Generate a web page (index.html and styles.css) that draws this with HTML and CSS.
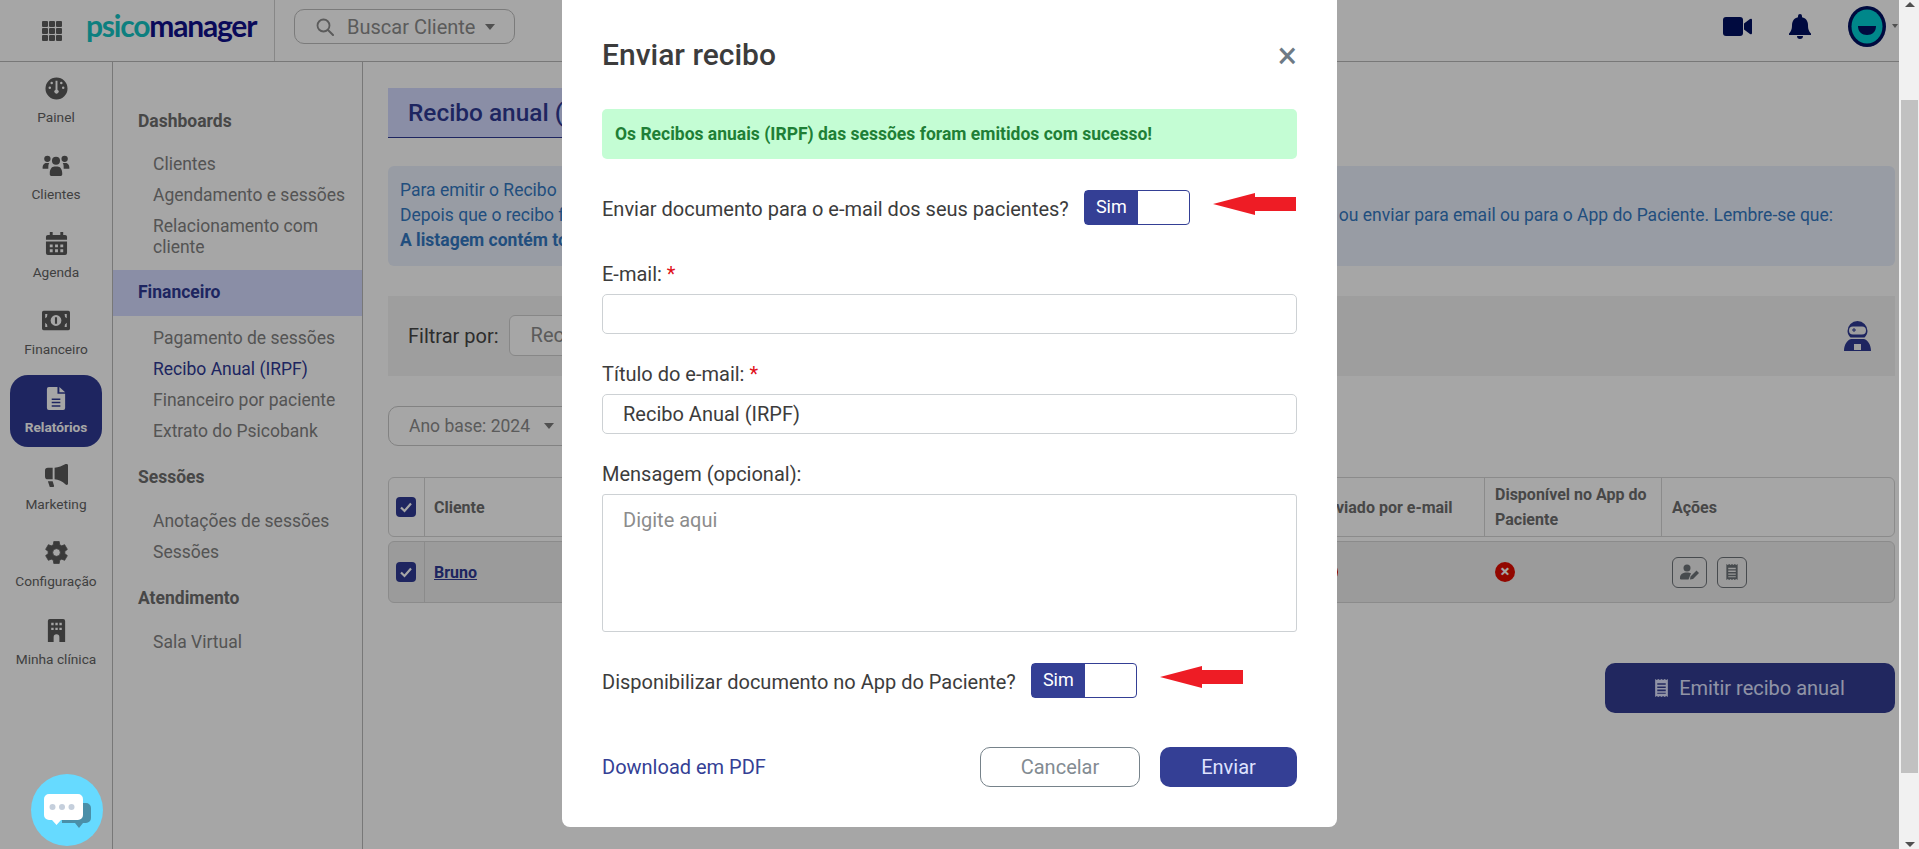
FILE: index.html
```html
<!DOCTYPE html>
<html lang="pt-BR">
<head>
    <meta charset="UTF-8">
    <title>Psicomanager - Recibo anual</title>
    <link rel="stylesheet" href="styles.css">
</head>
<body>
<div class="page">
    <header class="topbar">
        <div class="brand">
            <svg class="grid-icon" viewBox="0 0 20 20"><path d="M0 1a1 1 0 0 1 1-1h4a1 1 0 0 1 1 1v4a1 1 0 0 1-1 1H1a1 1 0 0 1-1-1zM7 1a1 1 0 0 1 1-1h4a1 1 0 0 1 1 1v4a1 1 0 0 1-1 1H8a1 1 0 0 1-1-1zM14 1a1 1 0 0 1 1-1h4a1 1 0 0 1 1 1v4a1 1 0 0 1-1 1h-4a1 1 0 0 1-1-1zM0 8a1 1 0 0 1 1-1h4a1 1 0 0 1 1 1v4a1 1 0 0 1-1 1H1a1 1 0 0 1-1-1zM7 8a1 1 0 0 1 1-1h4a1 1 0 0 1 1 1v4a1 1 0 0 1-1 1H8a1 1 0 0 1-1-1zM14 8a1 1 0 0 1 1-1h4a1 1 0 0 1 1 1v4a1 1 0 0 1-1 1h-4a1 1 0 0 1-1-1zM0 15a1 1 0 0 1 1-1h4a1 1 0 0 1 1 1v4a1 1 0 0 1-1 1H1a1 1 0 0 1-1-1zM7 15a1 1 0 0 1 1-1h4a1 1 0 0 1 1 1v4a1 1 0 0 1-1 1H8a1 1 0 0 1-1-1zM14 15a1 1 0 0 1 1-1h4a1 1 0 0 1 1 1v4a1 1 0 0 1-1 1h-4a1 1 0 0 1-1-1z"/></svg>
            <span class="logo"><span class="logo-teal">psico</span>manager</span>
        </div>
        <div class="search">
            <svg class="search-icon" viewBox="0 0 18 18"><circle cx="7.5" cy="7.5" r="6" fill="none" stroke="currentColor" stroke-width="1.8"/><path d="M12 12l5 5" stroke="currentColor" stroke-width="2" stroke-linecap="round"/></svg>
            <span>Buscar Cliente</span>
            <span class="caret"></span>
        </div>
        <div class="top-actions">
            <svg class="video-icon" viewBox="0 0 29 19"><rect width="20" height="19" rx="3"/><path d="M21 6.5l6-4.5q2-1 2 1v13q0 2-2 1l-6-4.5z"/></svg>
            <svg class="bell-icon" viewBox="0 0 22 25"><path d="M11 0a2 2 0 0 1 2 2v1.2c4 .8 6 4 6 8 0 5 1.500 6.500 3 8.300V21H0v-1.500c1.500-1.800 3-3.300 3-8.300 0-4 2-7.200 6-8V2a2 2 0 0 1 2-2zM8 22h6a3 3 0 0 1-6 0z"/></svg>
            <svg class="avatar" viewBox="0 0 38 41"><ellipse cx="19" cy="20.500" rx="19" ry="20.500" fill="#001062"/><ellipse cx="19" cy="20.500" rx="15.500" ry="17" fill="#00d0d4"/><path d="M10 20h18c0 6-4 9-9 9s-9-3-9-9z" fill="#001062"/></svg>
            <span class="caret caret-small"></span>
        </div>
    </header>

    <div class="layout">
        <nav class="rail">
            <a class="rail-item">
                <svg viewBox="0 0 24 24"><path fill-rule="evenodd" d="M12 .5a11.500 11.500 0 1 1 0 23 11.500 11.500 0 0 1 0-23zM11 4v9.200a2.200 2.200 0 1 0 2 0V4zM5 10a1.300 1.300 0 1 0 0 2.600A1.300 1.300 0 0 0 5 10zm14 0a1.300 1.300 0 1 0 0 2.600 1.300 1.300 0 0 0 0-2.600zM7 5a1.300 1.300 0 1 0 0 2.600A1.300 1.300 0 0 0 7 5zm10 0a1.300 1.300 0 1 0 0 2.600A1.300 1.300 0 0 0 17 5z"/></svg>
                <span>Painel</span>
            </a>
            <a class="rail-item">
                <svg class="wide" viewBox="0 0 28 24"><circle cx="5" cy="5" r="3.300"/><circle cx="23" cy="5" r="3.300"/><circle cx="14" cy="7" r="4.200"/><path d="M0 15c0-4 2-5.500 4-5.500h3c-1 1.500-1 3-1 6H1a1 1 0 0 1-1-.5zM28 15c0-4-2-5.500-4-5.500h-3c1 1.500 1 3 1 6h5a1 1 0 0 0 1-.5zM7.500 20c0-4 2-7 5-7h3c3 0 5 3 5 7v1.500a1.500 1.500 0 0 1-1.500 1.500H9a1.500 1.500 0 0 1-1.500-1.500z"/></svg>
                <span>Clientes</span>
            </a>
            <a class="rail-item">
                <svg viewBox="0 0 24 24"><path fill-rule="evenodd" d="M5 0h3v3h8V0h3v3h2a2 2 0 0 1 2 2v3H1V5a2 2 0 0 1 2-2h2zM1 10h22v12a2 2 0 0 1-2 2H3a2 2 0 0 1-2-2zm4 3v3h3v-3zm5.500 0v3h3v-3zm5.500 0v3h3v-3zM5 18v3h3v-3zm5.500 0v3h3v-3zm5.500 0v3h3v-3z"/></svg>
                <span>Agenda</span>
            </a>
            <a class="rail-item">
                <svg class="wide" viewBox="0 0 26 20"><path fill-rule="evenodd" d="M1.500 1h23A1.500 1.500 0 0 1 26 2.500v15a1.500 1.500 0 0 1-1.500 1.500h-23A1.500 1.500 0 0 1 0 17.500v-15A1.500 1.500 0 0 1 1.500 1zM13 5a5 5 0 1 0 0 10 5 5 0 0 0 0-10zM3 4v4a4 4 0 0 0 2-4zm20 0h-2a4 4 0 0 0 2 4zM3 16h2a4 4 0 0 0-2-4zm20 0v-4a4 4 0 0 0-2 4zM12 7h2v6h-2z"/></svg>
                <span>Financeiro</span>
            </a>
            <a class="rail-item active">
                <svg viewBox="0 0 24 24"><path fill-rule="evenodd" d="M5 0h9v7h8v15a2 2 0 0 1-2 2H5a2 2 0 0 1-2-2V2a2 2 0 0 1 2-2zm11 0l6 5.500h-6zM8 12v1.500h9V12zm0 3.500V17h9v-1.500zM8 19v1.500h9V19z" transform="translate(-1 0)"/></svg>
                <span>Relatórios</span>
            </a>
            <a class="rail-item">
                <svg viewBox="0 0 24 24"><path d="M23 0a1.500 1.500 0 0 1 1 1.500v19a1.500 1.500 0 0 1-2.500 1C18 18 14 16.500 10 16v-12c4-.5 8-2 11.500-4H23zM8 4v12H3a3 3 0 0 1-3-3V7a3 3 0 0 1 3-3zM3 18h5l1.500 5a1 1 0 0 1-1 1H5z"/></svg>
                <span>Marketing</span>
            </a>
            <a class="rail-item">
                <svg viewBox="0 0 24 24"><path fill-rule="evenodd" stroke="#5a5a5a" stroke-width=".8" stroke-linejoin="round" d="M8.700 3.840L9.150 .55H14.850L15.300 3.840L17.420 5.070L20.490 3.800L23.340 8.750L20.710 10.780V13.220L23.340 15.250L20.490 20.200L17.420 18.930L15.300 20.160L14.850 23.450H9.150L8.700 20.160L6.580 18.930L3.510 20.200L.66 15.250L3.290 13.220V10.780L.66 8.750L3.510 3.800L6.580 5.070zM12 8a4 4 0 1 0 0 8 4 4 0 0 0 0-8z"/></svg>
                <span>Configuração</span>
            </a>
            <a class="rail-item">
                <svg viewBox="0 0 24 24"><path fill-rule="evenodd" d="M5 0h14a2 2 0 0 1 2 2v22h-6v-5a3 3 0 0 0-6 0v5H3V2a2 2 0 0 1 2-2zm1.500 4v2.500h2.500V4zm4.300 0v2.500h2.500V4zm4.200 0v2.500h2.500V4zM6.500 9v2.500h2.500V9zm4.300 0v2.500h2.500V9zM15 9v2.500h2.500V9z"/></svg>
                <span>Minha clínica</span>
            </a>
        </nav>

        <aside class="subnav">
            <h4 class="nav-head first">Dashboards</h4>
            <a class="nav-link">Clientes</a>
            <a class="nav-link">Agendamento e sessões</a>
            <a class="nav-link">Relacionamento com cliente</a>
            <h4 class="nav-band">Financeiro</h4>
            <a class="nav-link">Pagamento de sessões</a>
            <a class="nav-link current">Recibo Anual (IRPF)</a>
            <a class="nav-link">Financeiro por paciente</a>
            <a class="nav-link">Extrato do Psicobank</a>
            <h4 class="nav-head">Sessões</h4>
            <a class="nav-link">Anotações de sessões</a>
            <a class="nav-link">Sessões</a>
            <h4 class="nav-head">Atendimento</h4>
            <a class="nav-link">Sala Virtual</a>
        </aside>

        <main class="content">
            <div class="title-band"><h1>Recibo anual (IRPF)</h1></div>

            <div class="info-box">
                <p class="info-line"><span>Para emitir o Recibo</span></p>
                <p class="info-line"><span>Depois que o recibo for</span><span class="info-end">ou enviar para email ou para o App do Paciente. Lembre-se que:</span></p>
                <p class="info-line"><strong>A listagem contém todos</strong></p>
            </div>

            <div class="filter-band">
                <label class="filter-label">Filtrar por:</label>
                <div class="filter-select">Recibo</div>
                <svg class="robot" viewBox="0 0 27 30"><path fill-rule="evenodd" d="M13.500 0a10 10 0 0 1 10 10c0 3-1.500 5-3 6.500h-14C5 15 3.500 13 3.500 10a10 10 0 0 1 10-10zM9 5.500a4 4 0 0 0 0 8h9a4 4 0 0 0 0-8z"/><path d="M8 8.500h1.500V7h1v1.500H12v1h-1.500V11h-1V9.500H8z"/><path fill-rule="evenodd" d="M7 18h13c4 1 7 6 7 12H0c0-6 3-11 7-12zm3 5v6h7v-6z"/></svg>
            </div>

            <div class="year-pill">Ano base: 2024 <span class="caret"></span></div>

            <div class="table-row table-head">
                <div class="cell cell-check"><span class="checkbox"><svg viewBox="0 0 20 20"><path d="M5 10.500l3.500 3.500L15 6.500" fill="none" stroke="#fff" stroke-width="2.200"/></svg></span></div>
                <div class="cell cell-client">Cliente</div>
                <div class="cell cell-status">Enviado por e-mail</div>
                <div class="cell cell-status two-lines">Disponível no App do Paciente</div>
                <div class="cell cell-actions">Ações</div>
            </div>
            <div class="table-row table-body">
                <div class="cell cell-check"><span class="checkbox"><svg viewBox="0 0 20 20"><path d="M5 10.500l3.500 3.500L15 6.500" fill="none" stroke="#fff" stroke-width="2.200"/></svg></span></div>
                <div class="cell cell-client"><a class="client-link">Bruno</a></div>
                <div class="cell cell-status"><span class="status-no">×</span></div>
                <div class="cell cell-status"><span class="status-no">×</span></div>
                <div class="cell cell-actions">
                    <button class="icon-btn btn-wide">
                        <svg viewBox="0 0 20 16"><circle cx="7" cy="4" r="3.500"/><path d="M0 14c0-4 3-5.500 7-5.500 1.500 0 3 .3 4 .8L8.500 15.500H1a1 1 0 0 1-1-1.500zM10 15.500l.5-3 6-6 2.500 2.500-6 6z"/></svg>
                    </button>
                    <button class="icon-btn">
                        <svg viewBox="0 0 12 17"><path fill-rule="evenodd" d="M0 0l1.500 1L3 0l1.500 1L6 0l1.500 1L9 0l1.500 1L12 0v17l-1.500-1L9 17l-1.500-1L6 17l-1.500-1L3 17l-1.500-1L0 17zM2 4v1.500h8V4zm0 3v1.500h8V7zm0 3v1.500h8V10zm0 3v1h8v-1z"/></svg>
                    </button>
                </div>
            </div>

            <div class="emit-row">
                <button class="emit-btn">
                    <svg viewBox="0 0 12 17"><path fill-rule="evenodd" d="M0 0l1.500 1L3 0l1.500 1L6 0l1.500 1L9 0l1.500 1L12 0v17l-1.500-1L9 17l-1.500-1L6 17l-1.500-1L3 17l-1.500-1L0 17zM2 4v1.500h8V4zm0 3v1.500h8V7zm0 3v1.500h8V10zm0 3v1h8v-1z"/></svg>
                    Emitir recibo anual
                </button>
            </div>
        </main>
    </div>

    <div class="backdrop">
        <div class="modal">
            <div class="modal-head">
                <h2>Enviar recibo</h2>
                <span class="modal-close">×</span>
            </div>

            <div class="alert-ok">Os Recibos anuais (IRPF) das sessões foram emitidos com sucesso!</div>

            <div class="toggle-row row-mail">
                <span class="toggle-label">Enviar documento para o e-mail dos seus pacientes?</span>
                <span class="toggle"><span class="toggle-on">Sim</span></span>
                <svg class="red-arrow" viewBox="0 0 83 22"><path d="M0 11L42 0v4h41v14H42v4z"/></svg>
            </div>

            <label class="field-label">E-mail: <span class="req">*</span></label>
            <input class="field field-gap" type="text">

            <label class="field-label">Título do e-mail: <span class="req">*</span></label>
            <input class="field field-gap" type="text" value="Recibo Anual (IRPF)">

            <label class="field-label">Mensagem (opcional):</label>
            <textarea class="field field-area" placeholder="Digite aqui"></textarea>

            <div class="toggle-row row-app">
                <span class="toggle-label">Disponibilizar documento no App do Paciente?</span>
                <span class="toggle"><span class="toggle-on">Sim</span></span>
                <svg class="red-arrow" viewBox="0 0 83 22"><path d="M0 11L42 0v4h41v14H42v4z"/></svg>
            </div>

            <div class="modal-foot">
                <a class="download-link">Download em PDF</a>
                <button class="btn-cancel">Cancelar</button>
                <button class="btn-send">Enviar</button>
            </div>
        </div>
    </div>

    <button class="chat-btn">
        <svg viewBox="0 0 47 37"><path d="M18 9h24a5 5 0 0 1 5 5v10a5 5 0 0 1-5 5h-3l-4 5-4-5H18z" fill="#4a8fa8"/><path d="M5 0h29a5 5 0 0 1 5 5v16a5 5 0 0 1-5 5H17l-4.500 5-4.500-5H5a5 5 0 0 1-5-5V5a5 5 0 0 1 5-5z" fill="#fff"/><circle cx="8.500" cy="13" r="3" fill="#c5cfdc"/><circle cx="18" cy="13" r="3" fill="#c5cfdc"/><circle cx="27.500" cy="13" r="3" fill="#c5cfdc"/></svg>
    </button>
</div>

<div class="scrollbar">
    <span class="scroll-up"></span>
    <span class="scroll-thumb"></span>
    <span class="scroll-down"></span>
</div>
</body>
</html>
```

FILE: styles.css
```css
* {
    box-sizing: border-box;
}
html, body {
    height: 100%;
}
body {
    margin: 0;
    display: flex;
    overflow: hidden;
    font-family: Roboto, "Liberation Sans", sans-serif;
    background-color: #fff;
    color: #5c5c5c;
}
h1, h2, h4, p {
    margin: 0;
}
button, input, textarea {
    font-family: inherit;
}

.page {
    position: relative;
    width: 1899px;
    height: 849px;
    overflow: hidden;
}

/* top bar */
.topbar {
    display: flex;
    height: 62px;
    border-bottom: 1px solid #b8b8b8;
}
.brand {
    display: flex;
    align-items: center;
    width: 275px;
    padding-left: 42px;
    gap: 24px;
    border-right: 1px solid #d0d0d0;
}
.grid-icon {
    width: 20px;
    height: 20px;
    fill: #5e5e5e;
}
.logo {
    font-family: Lato, sans-serif;
    font-size: 30px;
    font-weight: 700;
    letter-spacing: -1.2px;
    color: #10108a;
    line-height: 1;
    margin-top: -12px;
}
.logo-teal {
    color: #14c4c4;
}
.search {
    display: flex;
    align-items: center;
    width: 221px;
    height: 35px;
    margin: 9px 0 0 19px;
    padding-left: 21px;
    border: 1px solid #bdbdbd;
    border-radius: 10px;
    font-size: 20px;
    color: #8c8c8c;
}
.search-icon {
    width: 18px;
    height: 18px;
    margin-right: 13px;
}
.caret {
    display: inline-block;
    width: 0;
    height: 0;
    margin-left: 10px;
    border-left: 5px solid transparent;
    border-right: 5px solid transparent;
    border-top: 6px solid #7c7c7c;
}
.top-actions {
    display: flex;
    align-items: center;
    margin-left: auto;
    padding-right: 4px;
    padding-bottom: 9px;
}
.video-icon {
    width: 29px;
    height: 19px;
    fill: #001062;
}
.bell-icon {
    width: 22px;
    height: 25px;
    margin-left: 37px;
    fill: #001062;
}
.avatar {
    width: 38px;
    height: 41px;
    margin-left: 37px;
}
.caret-small {
    margin-left: 6px;
    margin-right: -3px;
    border-left-width: 3px;
    border-right-width: 3px;
    border-top-width: 4px;
}

.layout {
    display: flex;
    height: 787px;
}

/* icon rail */
.rail {
    width: 113px;
    padding: 3px 10px 0;
    border-right: 1px solid #b8b8b8;
}
.rail-item {
    display: flex;
    flex-direction: column;
    align-items: center;
    width: 92px;
    height: 72px;
    margin-bottom: 5.4px;
    padding-top: 12px;
    border-radius: 18px;
    font-size: 13.7px;
    line-height: 18px;
    color: #636363;
}
.rail-item svg {
    width: 23px;
    height: 23px;
    margin-bottom: 8px;
    fill: #5a5a5a;
}
.rail-item svg.wide {
    width: 28px;
}
.rail-item.active {
    background-color: #2f3a94;
    color: #fff;
    font-weight: 700;
}
.rail-item.active svg {
    fill: #fff;
}

/* second menu */
.subnav {
    width: 250px;
    padding-top: 49px;
    border-right: 1px solid #b8b8b8;
}
.nav-head, .nav-band {
    padding-left: 25px;
    font-size: 17.5px;
    font-weight: 700;
    line-height: 21px;
    color: #6e6e6e;
}
.nav-head {
    margin: 25px 0 23px;
}
.nav-head.first {
    margin-top: 0;
    margin-bottom: 22px;
}
.nav-band {
    margin: 11.5px 0 12px;
    padding-top: 12px;
    padding-bottom: 13px;
    background-color: #d4daff;
    color: #2f3a94;
}
.nav-link {
    display: block;
    padding: 0 10px 0 40px;
    margin-bottom: 10px;
    font-size: 17.5px;
    line-height: 21px;
    color: #828282;
}
.nav-link.current {
    color: #2f3a94;
}

/* main area */
.content {
    flex: 1;
    padding: 26px 4px 0 25px;
    min-width: 0;
}
.title-band {
    height: 50px;
    padding-left: 20px;
    background-color: #d4daff;
    border-bottom: 1px solid #2f3a94;
    width: 400px;
}
.title-band h1 {
    font-size: 24.4px;
    font-weight: 500;
    line-height: 50px;
    color: #2f3a94;
    white-space: nowrap;
}
.info-box {
    height: 100px;
    margin-top: 28px;
    padding: 12px 62px 12px 12px;
    background-color: #eaf0fc;
    border-radius: 6px;
    font-size: 17.5px;
    line-height: 25px;
    color: #3479c2;
}
.info-line {
    display: flex;
    justify-content: space-between;
    height: 25px;
}
.filter-band {
    display: flex;
    align-items: center;
    height: 80px;
    margin-top: 30px;
    padding: 0 24px 0 20px;
    background-color: #f3f3f3;
}
.filter-label {
    font-size: 20px;
    color: #454545;
    margin-right: 10px;
}
.filter-select {
    width: 300px;
    height: 41px;
    padding-left: 21px;
    margin-top: -1px;
    border: 1px solid #d0d0d0;
    border-radius: 6px;
    background-color: #fff;
    font-size: 20px;
    line-height: 39px;
    color: #8c8c8c;
}
.robot {
    width: 27px;
    height: 30px;
    margin-left: auto;
    fill: #2f3a94;
}
.year-pill {
    display: flex;
    align-items: center;
    width: 190px;
    height: 40px;
    margin-top: 30px;
    padding-left: 20px;
    border: 1px solid #c8c8c8;
    border-radius: 10px;
    font-size: 17.5px;
    color: #8c8c8c;
}
.year-pill .caret {
    margin-left: 14px;
}

/* table */
.table-row {
    display: flex;
    border: 1px solid #d6d6d6;
    border-radius: 6px;
    font-size: 16px;
}
.table-head {
    height: 60px;
    margin-top: 31px;
    font-weight: 700;
    color: #6e6e6e;
}
.table-body {
    height: 62px;
    margin-top: 4px;
    background-color: #eeeeee;
}
.cell {
    display: flex;
    align-items: center;
    padding-left: 10px;
    border-left: 1px solid #d6d6d6;
}
.table-body .cell {
    border-left-color: transparent;
}
.table-body .cell-client {
    border-left-color: #d6d6d6;
}
.cell-check {
    width: 35px;
    padding-left: 7px;
    border-left: 0;
}
.cell-client {
    width: 883px;
    padding-left: 9px;
}
.cell-status {
    width: 177px;
}
.two-lines {
    line-height: 25px;
}
.cell-actions {
    flex: 1;
}
.checkbox {
    display: block;
    width: 20px;
    height: 20px;
    border-radius: 4px;
    background-color: #2f3a94;
}
.checkbox svg {
    display: block;
}
.client-link {
    font-weight: 700;
    color: #2f3a94;
    text-decoration: underline;
}
.status-no {
    display: block;
    width: 20px;
    height: 20px;
    border-radius: 50%;
    background-color: #e00c00;
    color: #fff;
    font-size: 17px;
    font-weight: 700;
    line-height: 19px;
    text-align: center;
}
.icon-btn {
    display: flex;
    align-items: center;
    justify-content: center;
    width: 30px;
    height: 31px;
    margin-right: 10px;
    padding: 0;
    border: 1px solid #6e7378;
    border-radius: 6px;
    background-color: transparent;
}
.btn-wide {
    width: 35px;
}
.icon-btn svg {
    height: 16px;
    width: 20px;
    fill: #6e7378;
}
.emit-row {
    display: flex;
    justify-content: flex-end;
    margin-top: 60px;
}
.emit-btn {
    display: flex;
    align-items: center;
    justify-content: center;
    width: 290px;
    height: 50px;
    border: 0;
    border-radius: 10px;
    background-color: #333d92;
    font-size: 20px;
    color: #dfe2ff;
}
.emit-btn svg {
    width: 13px;
    height: 18px;
    margin-right: 11px;
    fill: #dfe2ff;
}

/* modal */
.backdrop {
    position: absolute;
    top: 0;
    left: 0;
    display: flex;
    justify-content: center;
    align-items: flex-start;
    width: 100%;
    height: 100%;
    background-color: rgba(0, 0, 0, .35);
}
.modal {
    width: 775px;
    height: 827px;
    padding: 37px 40px 0;
    background-color: #fff;
    border-radius: 0 0 8px 8px;
    color: #3c3c3c;
}
.modal-head {
    display: flex;
    justify-content: space-between;
    align-items: center;
    height: 34px;
    margin-bottom: 38px;
}
.modal-head h2 {
    font-size: 30px;
    font-weight: 500;
}
.modal-close {
    font-size: 36px;
    line-height: 34px;
    color: #6e7a85;
    margin-top: 4px;
}
.alert-ok {
    height: 50px;
    padding-left: 13px;
    background-color: #c4fdd4;
    border-radius: 5px;
    font-size: 17.5px;
    font-weight: 700;
    line-height: 50px;
    color: #1f7f36;
}
.toggle-row {
    display: flex;
    align-items: center;
    height: 35px;
    font-size: 20px;
}
.row-mail {
    margin: 31px 0 37px;
}
.row-app {
    margin: 31px 0 49px;
}
.toggle-label {
    padding-top: 2px;
}
.toggle {
    display: block;
    width: 106px;
    height: 35px;
    margin-left: 15px;
    border: 1px solid #343f95;
    border-radius: 4px;
    background-color: #fff;
}
.toggle-on {
    display: block;
    width: 53px;
    height: 100%;
    background-color: #343f95;
    color: #fff;
    font-size: 18px;
    line-height: 31px;
    text-align: center;
}
.red-arrow {
    width: 83px;
    height: 22px;
    margin-left: 23px;
    margin-top: -7px;
    fill: #ee1c25;
}
.field-label {
    display: block;
    height: 24px;
    margin-bottom: 8px;
    font-size: 20px;
    line-height: 24px;
}
.req {
    color: #e0101a;
}
.field {
    display: block;
    width: 100%;
    height: 40px;
    padding: 0 20px;
    border: 1px solid #cdd1d4;
    border-radius: 5px;
    font-size: 20px;
    color: #3c3c3c;
}
.field-gap {
    margin-bottom: 28px;
}
.field-area {
    height: 138px;
    padding-top: 13px;
    border-radius: 3px;
    resize: none;
    line-height: 24px;
}
.field-area::placeholder {
    color: #8c8c8c;
}
.modal-foot {
    display: flex;
    align-items: center;
}
.download-link {
    margin-right: auto;
    font-size: 20px;
    color: #343f95;
}
.btn-cancel, .btn-send {
    height: 40px;
    border-radius: 10px;
    font-size: 20px;
}
.btn-cancel {
    width: 160px;
    margin-right: 20px;
    background-color: #fff;
    border: 1px solid #76828a;
    color: #838b92;
}
.btn-send {
    width: 137px;
    background-color: #343f95;
    border: 0;
    color: #dfe2ff;
}

/* chat floats over the backdrop */
.chat-btn {
    position: absolute;
    left: 31px;
    top: 774px;
    display: flex;
    align-items: flex-end;
    justify-content: center;
    width: 72px;
    height: 72px;
    padding: 0 0 15px;
    border: 0;
    border-radius: 50%;
    background-color: #66daff;
}
.chat-btn svg {
    width: 47px;
    height: 37px;
}

/* scrollbar */
.scrollbar {
    display: flex;
    flex-direction: column;
    align-items: center;
    width: 20px;
    height: 849px;
    padding-left: 1px;
    background-color: #f1f1f1;
}
.scroll-up, .scroll-down {
    width: 0;
    height: 0;
    border-left: 5px solid transparent;
    border-right: 5px solid transparent;
}
.scroll-up {
    margin-top: 2px;
    border-bottom: 5px solid #505050;
}
.scroll-thumb {
    width: 17px;
    height: 673px;
    margin-top: 93px;
    background-color: #c1c1c1;
}
.scroll-down {
    margin-top: auto;
    margin-bottom: 2px;
    border-top: 5px solid #505050;
}
```
